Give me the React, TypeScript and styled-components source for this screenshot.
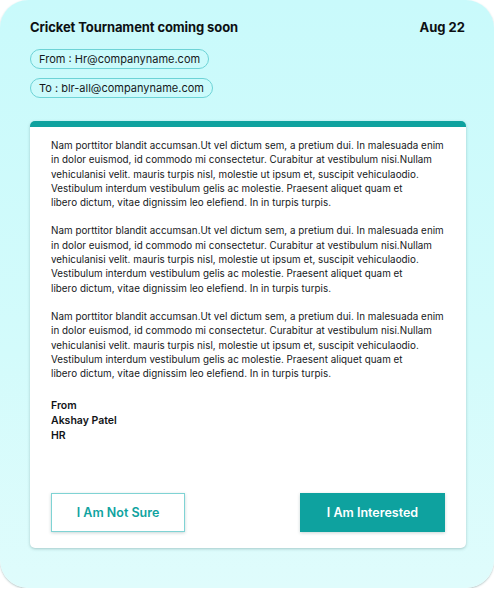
import React from "react";
import styled, { createGlobalStyle } from "styled-components";

const Global = createGlobalStyle`
  html, body { margin: 0; padding: 0; background: #ffffff; }
  body { font-family: "Inter", "Noto Sans", sans-serif; color: #111418; }
  * { box-sizing: border-box; }
`;

const Shell = styled.div`
  width: 494px;
  height: 588px;
  border-radius: 28px;
  background: linear-gradient(180deg, #c9fafb 0%, #d3fbfb 60%, #dffcfc 100%);
  box-shadow: 0 1px 2px rgba(90, 130, 130, 0.45);
  padding: 18px 28px 0 30px;
  display: flex;
  flex-direction: column;
`;

const Header = styled.div`
  display: flex;
  justify-content: space-between;
  align-items: center;
  height: 18px;
`;

const Title = styled.h1`
  margin: 0;
  font-size: 13px;
  font-weight: 700;
  letter-spacing: -0.1px;
  color: #0d1013;
`;

const DateText = styled.span`
  font-size: 13px;
  font-weight: 700;
  color: #0d1013;
  margin-right: 1px;
`;

const Pills = styled.div`
  display: flex;
  flex-direction: column;
  align-items: flex-start;
  gap: 9px;
  margin-top: 13px;
`;

const Pill = styled.div`
  height: 20px;
  padding: 0 8px;
  border: 1px solid #6dd3d6;
  border-radius: 10px;
  display: flex;
  align-items: center;
  font-size: 11px;
  color: #15191c;
  white-space: nowrap;
`;

const Card = styled.div`
  margin-top: 23px;
  height: 427px;
  background: #ffffff;
  border-radius: 5px;
  border-top: 6px solid #0ea29f;
  box-shadow: 0 1px 3px rgba(60, 110, 110, 0.35);
  padding: 12px 21px 16px 21px;
  display: flex;
  flex-direction: column;
`;

const Body = styled.div`
  flex: 1;
  display: flex;
  flex-direction: column;
  gap: 14px;
`;

const Paragraph = styled.p`
  margin: 0;
  font-size: 9.8px;
  letter-spacing: 0.04px;
  line-height: 14.3px;
  color: #15181b;
`;

const Line = styled.span`
  display: block;
  white-space: nowrap;
`;

const Signature = styled.div`
  margin-top: 3px;
  font-size: 10.5px;
  line-height: 15px;
  font-weight: 600;
  color: #111418;
`;

const Actions = styled.div`
  display: flex;
  justify-content: space-between;
  align-items: center;
`;

const Button = styled.button<{ $primary?: boolean }>`
  height: 39px;
  width: ${(p) => (p.$primary ? "145px" : "134px")};
  font-family: inherit;
  font-size: 12.5px;
  font-weight: 600;
  cursor: pointer;
  border: 1px solid ${(p) => (p.$primary ? "#0ea29f" : "#7fd3d4")};
  background: ${(p) => (p.$primary ? "#0ea29f" : "#ffffff")};
  color: ${(p) => (p.$primary ? "#ffffff" : "#10a3a0")};
  box-shadow: 0 1px 3px rgba(40, 90, 90, 0.25);
`;

const para = [
  "Nam porttitor blandit accumsan.Ut vel dictum sem, a pretium dui. In malesuada enim",
  "in dolor euismod, id commodo mi consectetur. Curabitur at vestibulum nisi.Nullam",
  "vehiculanisi velit. mauris turpis nisl, molestie ut ipsum et, suscipit vehiculaodio.",
  "Vestibulum interdum vestibulum gelis ac molestie. Praesent aliquet quam et",
  "libero dictum, vitae dignissim leo elefiend. In in turpis turpis.",
];

export default function App() {
  return (
    <>
      <Global />
      <Shell>
        <Header>
          <Title>Cricket Tournament coming soon</Title>
          <DateText>Aug 22</DateText>
        </Header>
        <Pills>
          <Pill>From : Hr@companyname.com</Pill>
          <Pill>To : blr-all@companyname.com</Pill>
        </Pills>
        <Card>
          <Body>
            {[0, 1, 2].map((i) => (
              <Paragraph key={i}>
                {para.map((l, j) => (
                  <Line key={j}>{l}</Line>
                ))}
              </Paragraph>
            ))}
            <Signature>
              <Line>From</Line>
              <Line>Akshay Patel</Line>
              <Line>HR</Line>
            </Signature>
          </Body>
          <Actions>
            <Button>I Am Not Sure</Button>
            <Button $primary>I Am Interested</Button>
          </Actions>
        </Card>
      </Shell>
    </>
  );
}
